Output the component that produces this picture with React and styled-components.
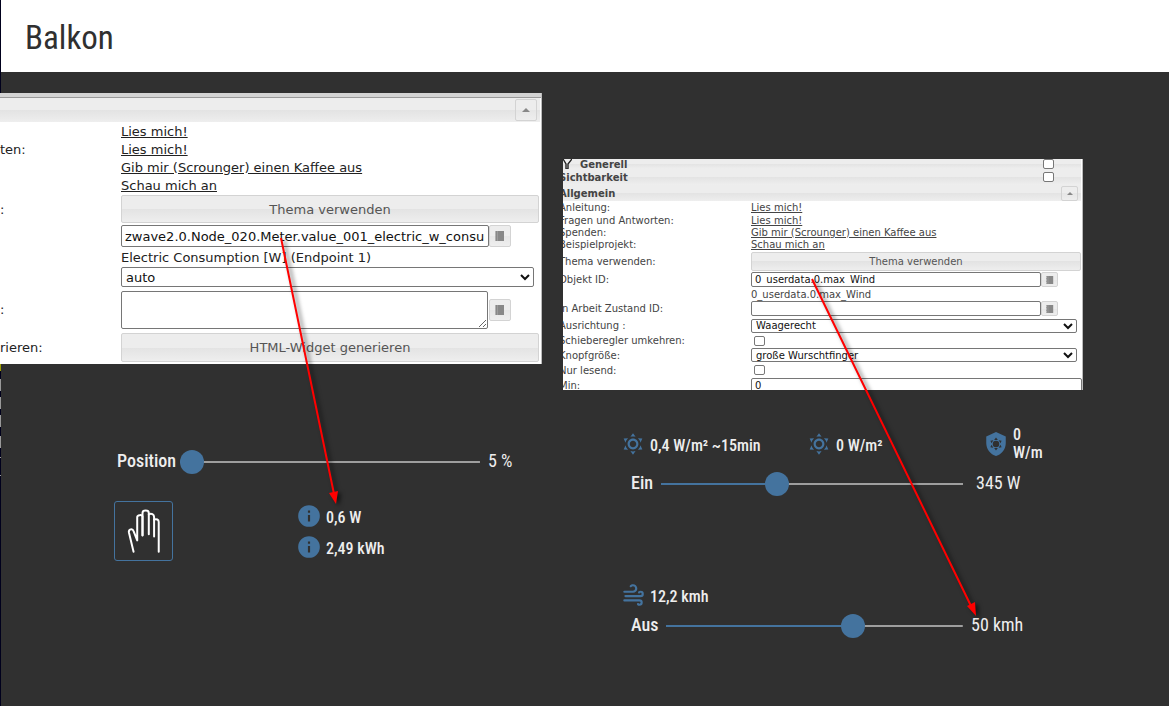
import { useState } from 'react';
import styled, { createGlobalStyle } from 'styled-components';

const GlobalStyle = createGlobalStyle`
  * {
    box-sizing: border-box;
  }

  body {
    margin: 0;
    background-color: #303030;
    font-family: "Roboto Condensed", Roboto, sans-serif;
  }
`;

const StPage = styled.div`
  position: relative;
  min-height: 100vh;
  overflow: hidden;
  background-color: #303030;
`;

// schmaler Rand am linken Seitenrand
const StEdge = styled.div`
  position: absolute;
  top: 0;
  bottom: 0;
  left: 0;
  width: 1px;
  background: linear-gradient(
    #00001c 364px, #a0a000 364px 371px, #00001c 371px 379px, #999 379px 391px,
    #00001c 391px 397px, #999 397px 409px, #00001c 409px 415px, #999 415px 427px,
    #00001c 427px 436px, #999 436px 448px, #00001c 448px 457px, #999 457px 458px,
    #00001c 458px 475px, #999 475px 476px, #00001c 476px
  );
`;

const StHeader = styled.header`
  display: flex;
  align-items: center;
  height: 72px;
  padding: 2px 0 0 25px;
  background-color: white;
`;

const StTitle = styled.h1`
  margin: 0;
  color: #303030;
  font-size: 33px;
  font-weight: 400;
`;

const StMain = styled.main`
  display: grid;
  grid-template-columns: 542fr 520fr;
  column-gap: 21px;
  align-items: start;
  padding: 21px 86px 0 0;
`;

const StColumn = styled.section`
  min-width: 0;
  padding-top: ${({ $top }) => $top || 0}px;
`;

// ---------- Eigenschaften-Panel ----------
const StPanel = styled.form`
  position: relative;
  height: ${({ $height }) => $height}px;
  overflow: hidden;
  border-right: 1px solid #bbb;
  background-color: white;
  color: ${({ $small }) => ($small ? '#444' : '#222')};
  font-family: "DejaVu Sans", Verdana, sans-serif;
  font-size: ${({ $small }) => ($small ? 10 : 13)}px;
`;

const StPanelTop = styled.div`
  height: 5px;
  border-bottom: 1px solid #999;
  background-color: #d3d3d3;
`;

const StGroup = styled.div`
  display: flex;
  align-items: center;
  justify-content: space-between;
  height: ${({ $height }) => $height}px;
  margin-right: 1px;
  padding-right: 3px;
  background: linear-gradient(#ededed 50%, #e3e3e3 50%, #eee);
  font-weight: bold;
`;

const StGroupName = styled.label`
  display: flex;
  align-items: center;
  gap: 8px;
  margin-left: ${({ $inset }) => $inset || -4}px;
`;

const StRow = styled.div`
  display: grid;
  grid-template-columns: ${({ $labels }) => $labels}px minmax(0, 1fr);
  align-items: center;
  height: ${({ $height }) => $height}px;
  padding-right: ${({ $right }) => $right || 0}px;
`;

const StLabel = styled.label`
  margin-left: ${({ $cut }) => ($cut ? -4 : 0)}px;
  white-space: nowrap;
`;

const StLink = styled.a`
  color: inherit;
  text-decoration: underline;
`;

const StField = styled.div`
  display: flex;
  align-items: center;
`;

const StButton = styled.button`
  width: 100%;
  height: ${({ $height }) => $height}px;
  padding: 0;
  border: 1px solid #d3d3d3;
  border-radius: 2px;
  background: linear-gradient(#ededed 50%, #e3e3e3 50%, #eee);
  color: #555;
  font: inherit;
`;

const StSquareButton = styled.button`
  display: flex;
  flex: none;
  align-items: center;
  justify-content: center;
  width: ${({ $small }) => ($small ? 17 : 22)}px;
  height: ${({ $small }) => ($small ? 15 : 22)}px;
  margin-left: ${({ $gap }) => $gap || 0}px;
  padding: 0;
  border: 1px solid #d3d3d3;
  border-radius: 2px;
  background: linear-gradient(#ededed 50%, #e6e6e6 50%, #eee);
  color: #888;
`;

const StInput = styled.input`
  flex: 1;
  min-width: 0;
  height: ${({ $height }) => $height}px;
  padding: 0 3px;
  border: 1px solid #767676;
  border-radius: 2px;
  background-color: white;
  color: #111;
  font: inherit;
`;

const StSelectWrap = styled.div`
  position: relative;
  width: 100%;

  svg {
    position: absolute;
    top: 50%;
    right: 4px;
    transform: translateY(-50%);
    pointer-events: none;
  }
`;

const StSelect = styled.select`
  display: block;
  width: 100%;
  height: ${({ $height }) => $height}px;
  padding: 0 4px;
  appearance: none;
  border: 1px solid #767676;
  border-radius: 2px;
  background-color: white;
  color: #111;
  font: inherit;
`;

const StTextarea = styled.textarea`
  flex: 1;
  height: 38px;
  border: 1px solid #767676;
  border-radius: 2px;
  background-color: white;
  resize: both;
`;

const StCheckbox = styled.input`
  flex: none;
  width: 11px;
  height: 10px;
  margin: 0 ${({ $right }) => $right || 0}px 0 ${({ $left }) => $left || 0}px;
  appearance: none;
  border: 1px solid #777;
  border-radius: 2px;
  background-color: white;
`;

// ---------- Widgets ----------
const StWidgets = styled.div`
  padding: ${({ $padding }) => $padding};
  color: #eee;
`;

const StBlock = styled.div`
  margin-top: ${({ $top }) => $top}px;
`;

const StSliderRow = styled.div`
  display: flex;
  align-items: center;
  height: 24px;
  margin-left: ${({ $indent }) => $indent || 0}px;
  font-size: 18px;
  line-height: 20px;
`;

const StSliderLabel = styled.label`
  margin-right: ${({ $gap }) => $gap}px;
  padding-bottom: 2px;
  font-weight: 500;
`;

const StSlider = styled.input`
  flex: 1;
  min-width: 0;
  height: 24px;
  margin: 0;
  appearance: none;
  background: linear-gradient(
    to right,
    #44739e ${({ $fill }) => $fill}%,
    #9e9e9e ${({ $fill }) => $fill}%
  ) center / 100% 2px no-repeat;

  &::-webkit-slider-thumb {
    width: 24px;
    height: 24px;
    appearance: none;
    border-radius: 50%;
    background-color: #44739e;
  }
`;

const StSliderValue = styled.output`
  width: ${({ $width }) => $width}px;
  padding: 0 0 2px ${({ $gap }) => $gap}px;
  white-space: nowrap;
`;

const StActions = styled.div`
  display: flex;
  gap: 123px;
  margin-top: 27px;
`;

const StHandButton = styled.button`
  display: flex;
  align-items: center;
  justify-content: center;
  width: 59px;
  height: 60px;
  padding: 0;
  border: 1px solid #44739e;
  border-radius: 3px;
  background: transparent;
`;

const StReadings = styled.div`
  display: flex;
  flex-direction: column;
  gap: 5px;
  padding-top: 2px;
`;

const StStats = styled.div`
  display: grid;
  grid-template-columns: 186px 177px 1fr;
  height: 36px;
`;

const StReading = styled.div`
  display: flex;
  align-items: center;
  gap: 4px;
  min-height: 26px;
  font-size: 16px;
  font-weight: 500;
  line-height: 18px;

  svg {
    flex: none;
    fill: #44739e;
  }

  span {
    padding-top: ${({ $lower }) => $lower ?? 3}px;
  }
`;

const StArrows = styled.svg`
  position: absolute;
  top: 0;
  left: 0;
  pointer-events: none;
  filter: drop-shadow(3px 2px 2px rgba(0, 0, 0, 0.6));
`;

const SUN = 'M12 7C9.24 7 7 9.24 7 12S9.24 17 12 17 17 14.76 17 12 14.76 7 12 7M12 9C13.65 9 15 10.35 15 12S13.65 15 12 15 9 13.65 9 12 10.35 9 12 9M12 2L14.39 5.42C13.65 5.15 12.84 5 12 5S10.35 5.15 9.61 5.42L12 2M3.34 7L7.5 6.65C6.9 7.16 6.36 7.78 5.94 8.5 5.5 9.24 5.25 10 5.11 10.79L3.34 7M3.36 17L5.12 13.23C5.26 14 5.53 14.78 5.95 15.5 6.37 16.24 6.91 16.86 7.5 17.37L3.36 17M20.65 7L18.88 10.79C18.74 10 18.47 9.23 18.05 8.5 17.63 7.78 17.1 7.15 16.5 6.64L20.65 7M20.64 17L16.5 17.36C17.09 16.85 17.62 16.22 18.04 15.5 18.46 14.77 18.73 14 18.87 13.21L20.64 17M12 22L9.59 18.56C10.33 18.83 11.14 19 12 19 12.82 19 13.63 18.83 14.37 18.56L12 22Z';
const WIND = 'M4,10A1,1 0 0,1 3,9A1,1 0 0,1 4,8H12A2,2 0 0,0 14,6A2,2 0 0,0 12,4C11.45,4 10.95,4.22 10.59,4.59C10.2,5 9.56,5 9.17,4.59C8.78,4.2 8.78,3.56 9.17,3.17C9.9,2.45 10.9,2 12,2A4,4 0 0,1 16,6A4,4 0 0,1 12,10H4M19,12A1,1 0 0,0 20,11A1,1 0 0,0 19,10C18.72,10 18.47,10.11 18.29,10.29C17.9,10.68 17.27,10.68 16.88,10.29C16.5,9.9 16.5,9.27 16.88,8.88C17.42,8.34 18.17,8 19,8A3,3 0 0,1 22,11A3,3 0 0,1 19,14H5A1,1 0 0,1 4,13A1,1 0 0,1 5,12H19M18,18H4A1,1 0 0,1 3,17A1,1 0 0,1 4,16H18A3,3 0 0,1 21,19A3,3 0 0,1 18,22C17.17,22 16.42,21.66 15.88,21.12C15.5,20.73 15.5,20.1 15.88,19.71C16.27,19.32 16.9,19.32 17.29,19.71C17.47,19.89 17.72,20 18,20A1,1 0 0,0 19,19A1,1 0 0,0 18,18Z';
const INFO = 'M13,9H11V7H13M13,17H11V11H13M12,2A10,10 0 0,0 2,12A10,10 0 0,0 12,22A10,10 0 0,0 22,12A10,10 0 0,0 12,2Z';
const SHIELD = 'M12,1L3,5V11C3,16.55 6.84,21.74 12,23C17.16,21.74 21,16.55 21,11V5L12,1Z';

function Icon({ path }) {
  return (
    <svg width="26" height="26" viewBox="0 0 24 24" aria-hidden="true">
      <path d={path} />
    </svg>
  );
}

function ShieldSunIcon() {
  return (
    <svg width="26" height="26" viewBox="0 0 24 24" aria-hidden="true">
      <path d={SHIELD} />
      <circle cx="12" cy="12" r="3" style={{ fill: '#303030' }} />
      <path
        d="M12 6L13.7 8.2H10.3ZM12 18L10.3 15.8H13.7ZM6.8 9L9.5 8.6 7.9 11.4ZM6.8 15L7.9 12.6 9.5 15.4ZM17.2 9L16.1 11.4 14.5 8.6ZM17.2 15L14.5 15.4 16.1 12.6Z"
        style={{ fill: '#303030' }}
      />
    </svg>
  );
}

function HandIcon() {
  return (
    <svg width="37" height="48" viewBox="0 0 110 145" fill="none" stroke="#fff" strokeWidth="6" strokeLinecap="round" strokeLinejoin="round" aria-hidden="true">
      <path d="M25 135L11 77C9 66 22 64 25 73L36 101V31C36 23 51 23 52 28V86" />
      <path d="M52 85V18C52 8 71 8 71 18V82" />
      <path d="M71 22C79 18 87 22 87 30V89" />
      <path d="M87 38C94 35 101 38 101 45V135" />
    </svg>
  );
}

function BookIcon({ small }) {
  return (
    <svg width={small ? 8 : 10} height={small ? 8 : 10} viewBox="0 0 10 10" aria-hidden="true">
      <path d="M0 1h1M0 3h1M0 5h1M0 7h1M0 9h1" stroke="#777" />
      <rect x="1" width="8" height="10" fill="#888" />
      <path d="M2.5 0V10" stroke="#aaa" strokeWidth="0.6" />
    </svg>
  );
}

function UpIcon({ small }) {
  return (
    <svg width={small ? 6 : 8} height={small ? 3 : 4} viewBox="0 0 8 4" aria-hidden="true">
      <path d="M0 4L4 0L8 4Z" fill="#888" />
    </svg>
  );
}

function Select({ id, label, value, height }) {
  return (
    <StSelectWrap>
      <StSelect id={id} aria-label={label} $height={height} defaultValue={value}>
        <option>{value}</option>
      </StSelect>
      <svg width="10" height="8" viewBox="0 0 10 8" aria-hidden="true">
        <path d="M1 2L5 6L9 2" fill="none" stroke="#111" strokeWidth="2" />
      </svg>
    </StSelectWrap>
  );
}

function Slider({ id, label, start, max, unit, gap, indent, valueGap, valueWidth, shown }) {
  const [value, setValue] = useState(start);

  return (
    <StSliderRow $indent={indent}>
      <StSliderLabel htmlFor={id} $gap={gap}>{label}</StSliderLabel>
      <StSlider
        id={id}
        type="range"
        min="0"
        max={max}
        value={value}
        $fill={(value / max) * 100}
        onChange={(event) => setValue(Number(event.target.value))}
      />
      <StSliderValue htmlFor={id} $gap={valueGap} $width={valueWidth}>
        {value === start && shown ? shown : value} {unit}
      </StSliderValue>
    </StSliderRow>
  );
}

function MeterPanel() {
  return (
    <StPanel $height={271}>
      <StPanelTop />
      <StGroup $height={24}>
        <span />
        <StSquareButton type="button" aria-label="Einklappen"><UpIcon /></StSquareButton>
      </StGroup>
      <StRow $labels={121} $height={18}><span /><div><StLink href="#doc">Lies mich!</StLink></div></StRow>
      <StRow $labels={121} $height={18}><span>ten:</span><div><StLink href="#faq">Lies mich!</StLink></div></StRow>
      <StRow $labels={121} $height={18}><span /><div><StLink href="#donate">Gib mir (Scrounger) einen Kaffee aus</StLink></div></StRow>
      <StRow $labels={121} $height={18}><span /><div><StLink href="#demo">Schau mich an</StLink></div></StRow>
      <StRow $labels={121} $height={30} $right={2}>
        <span>:</span>
        <StButton type="button" $height={28}>Thema verwenden</StButton>
      </StRow>
      <StRow $labels={121} $height={24} $right={30}>
        <span />
        <StField>
          <StInput aria-label="Objekt ID" $height={22} defaultValue="zwave2.0.Node_020.Meter.value_001_electric_w_consumption" />
          <StSquareButton type="button" aria-label="Objekt wählen"><BookIcon /></StSquareButton>
        </StField>
      </StRow>
      <StRow $labels={121} $height={18}><span /><span>Electric Consumption [W] (Endpoint 1)</span></StRow>
      <StRow $labels={121} $height={22} $right={7}>
        <span />
        <Select id="type" label="Typ" value="auto" height={20} />
      </StRow>
      <StRow $labels={121} $height={43} $right={30}>
        <StLabel htmlFor="text">:</StLabel>
        <StField>
          <StTextarea id="text" />
          <StSquareButton type="button" $gap={1} aria-label="Objekt wählen"><BookIcon /></StSquareButton>
        </StField>
      </StRow>
      <StRow $labels={121} $height={32} $right={2}>
        <span>rieren:</span>
        <StButton type="button" $height={29}>HTML-Widget generieren</StButton>
      </StRow>
    </StPanel>
  );
}

function SliderPanel() {
  return (
    <StPanel $height={231} $small>
      <StGroup $height={10}>
        <StGroupName htmlFor="general" $inset={-1}>
          <svg width="10" height="10" viewBox="0 0 10 10" aria-hidden="true">
            <path d="M1 0L4 5V10H6V5L10 0" fill="none" stroke="#222" strokeWidth="1.4" />
          </svg>
          Generell
        </StGroupName>
        <StCheckbox id="general" type="checkbox" $right={24} />
      </StGroup>
      <StGroup $height={16}>
        <StGroupName htmlFor="visible">Sichtbarkeit</StGroupName>
        <StCheckbox id="visible" type="checkbox" $right={24} />
      </StGroup>
      <StGroup $height={16}>
        <StGroupName as="span">Allgemein</StGroupName>
        <StSquareButton type="button" $small aria-label="Einklappen"><UpIcon small /></StSquareButton>
      </StGroup>
      <StRow $labels={188} $height={13}><StLabel as="span" $cut>Anleitung:</StLabel><div><StLink href="#doc">Lies mich!</StLink></div></StRow>
      <StRow $labels={188} $height={12}><StLabel as="span" $cut>Fragen und Antworten:</StLabel><div><StLink href="#faq">Lies mich!</StLink></div></StRow>
      <StRow $labels={188} $height={12}><StLabel as="span" $cut>Spenden:</StLabel><div><StLink href="#donate">Gib mir (Scrounger) einen Kaffee aus</StLink></div></StRow>
      <StRow $labels={188} $height={13}><StLabel as="span" $cut>Beispielprojekt:</StLabel><div><StLink href="#demo">Schau mich an</StLink></div></StRow>
      <StRow $labels={188} $height={20} $right={1}>
        <StLabel as="span" $cut>Thema verwenden:</StLabel>
        <StButton type="button" $height={19}>Thema verwenden</StButton>
      </StRow>
      <StRow $labels={188} $height={17} $right={24}>
        <StLabel htmlFor="oid" $cut>Objekt ID:</StLabel>
        <StField>
          <StInput id="oid" $height={15} defaultValue="0_userdata.0.max_Wind" />
          <StSquareButton type="button" $small aria-label="Objekt wählen"><BookIcon small /></StSquareButton>
        </StField>
      </StRow>
      <StRow $labels={188} $height={12}><span /><span>0_userdata.0.max_Wind</span></StRow>
      <StRow $labels={188} $height={17} $right={24}>
        <StLabel htmlFor="working" $cut>In Arbeit Zustand ID:</StLabel>
        <StField>
          <StInput id="working" $height={15} />
          <StSquareButton type="button" $small aria-label="Objekt wählen"><BookIcon small /></StSquareButton>
        </StField>
      </StRow>
      <StRow $labels={188} $height={17} $right={5}>
        <StLabel htmlFor="direction" $cut>Ausrichtung :</StLabel>
        <Select id="direction" value="Waagerecht" height={14} />
      </StRow>
      <StRow $labels={188} $height={13}>
        <StLabel htmlFor="reverse" $cut>Schieberegler umkehren:</StLabel>
        <StCheckbox id="reverse" type="checkbox" $left={3} />
      </StRow>
      <StRow $labels={188} $height={16} $right={5}>
        <StLabel htmlFor="knob" $cut>Knopfgröße:</StLabel>
        <Select id="knob" value="große Wurschtfinger" height={14} />
      </StRow>
      <StRow $labels={188} $height={14}>
        <StLabel htmlFor="readonly" $cut>Nur lesend:</StLabel>
        <StCheckbox id="readonly" type="checkbox" $left={3} />
      </StRow>
      <StRow $labels={188} $height={17}>
        <StLabel htmlFor="min" $cut>Min:</StLabel>
        <StField><StInput id="min" $height={15} defaultValue="0" /></StField>
      </StRow>
    </StPanel>
  );
}

function App() {
  return (
    <StPage>
      <GlobalStyle />
      <StHeader>
        <StTitle>Balkon</StTitle>
      </StHeader>
      <StEdge />
      <StMain>
        <StColumn>
          <MeterPanel />
          <StWidgets $padding="86px 22px 0 114px">
            <Slider id="position" label="Position" start={0} shown="5" max={100} unit="%" indent={3} gap={4} valueGap={8} valueWidth={40} />
            <StActions>
              <StHandButton type="button" aria-label="Manuell"><HandIcon /></StHandButton>
              <StReadings>
                <StReading><Icon path={INFO} /><span>0,6 W</span></StReading>
                <StReading><Icon path={INFO} /><span>2,49 kWh</span></StReading>
              </StReadings>
            </StActions>
          </StWidgets>
        </StColumn>
        <StColumn $top={66}>
          <SliderPanel />
          <StWidgets $padding="36px 38px 0 57px">
            <StStats>
              <StReading><Icon path={SUN} /><span>0,4 W/m² ~15min</span></StReading>
              <StReading><Icon path={SUN} /><span>0 W/m²</span></StReading>
              <StReading $lower={0}><ShieldSunIcon /><span>0<br />W/m</span></StReading>
            </StStats>
            <StBlock $top={10}>
              <Slider id="on" label="Ein" start={345} max={922} unit="W" indent={11} gap={8} valueGap={13} valueWidth={82} />
            </StBlock>
            <StBlock $top={86}>
              <StReading><Icon path={WIND} /><span>12,2 kmh</span></StReading>
            </StBlock>
            <StBlock $top={6}>
              <Slider id="off" label="Aus" start={50} max={78} unit="kmh" indent={11} gap={8} valueGap={8} valueWidth={82} />
            </StBlock>
          </StWidgets>
        </StColumn>
      </StMain>
      <StArrows width="1169" height="706" viewBox="0 0 1169 706" aria-hidden="true">
        <path d="M281 238L334 494M812 279L971 606" fill="none" stroke="#f00" strokeWidth="2" />
        <path d="M329 493L338 491L336 504ZM967 606L975 602L976 616Z" fill="#f00" />
      </StArrows>
    </StPage>
  );
}

export default App;
